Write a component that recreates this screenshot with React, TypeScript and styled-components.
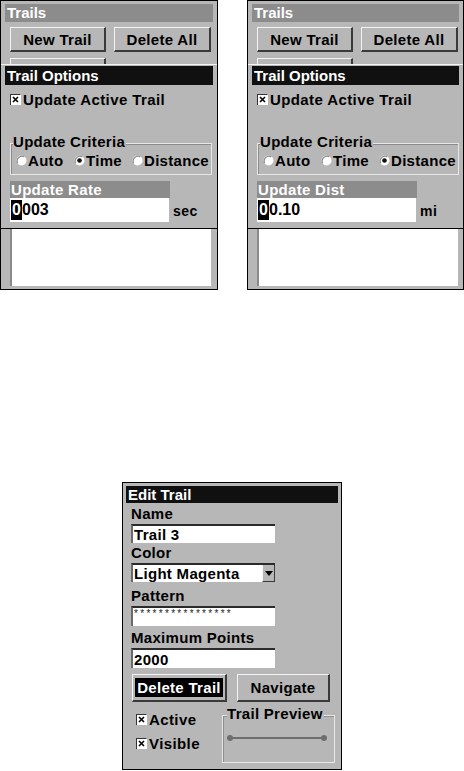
import React from "react";
import styled, { createGlobalStyle } from "styled-components";

const BG = "#b7b7b7";
const MID = "#8c8c8c";
const DARK = "#101010";

const Global = createGlobalStyle`
  html, body { margin: 0; padding: 0; background: #fff; }
  body {
    font-family: "Liberation Sans", Arial, sans-serif;
    font-weight: bold;
    font-size: 15px;
    color: #000;
  }
  * { box-sizing: border-box; }
`;

const Page = styled.div`
  width: 464px;
  height: 771px;
  display: flex;
  flex-direction: column;
`;

const TopRow = styled.div`
  display: flex;
  gap: 29px;
  height: 290px;
`;

const Panel = styled.section<{ $w: number }>`
  position: relative;
  width: ${(p) => p.$w}px;
  height: 290px;
  background: ${BG};
  border: 1px solid #000;
  padding: 3px 4px 3px 4px;
  display: flex;
  flex-direction: column;
`;

const GrayTitle = styled.div`
  height: 18px;
  line-height: 18px;
  background: ${MID};
  color: #fff;
  padding-left: 2px;
`;

const DarkTitle = styled.div<{ $h: number }>`
  height: ${(p) => p.$h}px;
  line-height: ${(p) => p.$h}px;
  background: ${DARK};
  color: #fff;
  padding-left: 2px;
`;

const ButtonRow = styled.div<{ $gap: number; $top: number; $left: number }>`
  display: flex;
  gap: ${(p) => p.$gap}px;
  margin-top: ${(p) => p.$top}px;
  padding-left: ${(p) => p.$left}px;
`;

const Button = styled.div<{ $w: number; $h: number }>`
  width: ${(p) => p.$w}px;
  height: ${(p) => p.$h}px;
  background: ${BG};
  border-top: 1px solid #f4f4f4;
  border-left: 1px solid #f4f4f4;
  border-right: 2px solid #3a3a3a;
  border-bottom: 2px solid #3a3a3a;
  display: flex;
  align-items: center;
  justify-content: center;
  letter-spacing: 0.3px;
`;

const Focus = styled.span`
  background: #000;
  color: #fff;
  padding: 1px 2px;
  line-height: 17px;
`;

const ListBox = styled.div`
  margin-top: auto;
  margin-left: 5px;
  width: 201px;
  height: 57px;
  background: #fff;
  border-left: 2px solid #8a8a8a;
`;

const Overlay = styled.div`
  position: absolute;
  left: 0;
  right: 0;
  top: 63px;
  height: 165px;
  background: ${BG};
  border-top: 1px solid #f4f4f4;
  border-bottom: 1px solid #000;
  padding: 1px 4px 0 4px;
  display: flex;
  flex-direction: column;
`;

const CheckRow = styled.div<{ $top: number; $left: number }>`
  display: flex;
  align-items: center;
  gap: 2px;
  height: 16px;
  margin-top: ${(p) => p.$top}px;
  padding-left: ${(p) => p.$left}px;
  letter-spacing: 0.4px;
`;

const Group = styled.div<{ $w: number; $h: number; $top: number; $left: number }>`
  width: ${(p) => p.$w}px;
  height: ${(p) => p.$h}px;
  margin-top: ${(p) => p.$top}px;
  margin-left: ${(p) => p.$left}px;
  border: 1px solid #e8e8e8;
  box-shadow: 1px 1px 0 #8c8c8c inset;
  display: flex;
  flex-direction: column;
`;

const Legend = styled.div<{ $left: number }>`
  align-self: flex-start;
  margin: -10px 0 0 ${(p) => p.$left}px;
  height: 16px;
  line-height: 16px;
  background: ${BG};
  padding-right: 1px;
  letter-spacing: 0.3px;
`;

const RadioRow = styled.div`
  display: flex;
  align-items: center;
  height: 16px;
  margin-top: 2px;
  padding-left: 5px;
`;

const RadioItem = styled.div<{ $w?: number }>`
  display: flex;
  align-items: center;
  gap: 1px;
  flex: 0 0 ${(p) => (p.$w ? `${p.$w}px` : "auto")};
  letter-spacing: 0.3px;
`;

const FieldHeader = styled.div`
  margin-top: 6px;
  margin-left: 5px;
  width: 160px;
  height: 17px;
  line-height: 17px;
  background: ${MID};
  color: #fff;
  padding-left: 1px;
  letter-spacing: 0.3px;
`;

const ValueRow = styled.div`
  display: flex;
  align-items: flex-end;
  margin-left: 5px;
`;

const ValueBox = styled.div`
  width: 159px;
  height: 24px;
  background: #fff;
  display: flex;
  align-items: center;
  padding-left: 1px;
  font-size: 16px;
`;

const Cursor = styled.span`
  display: inline-block;
  width: 11px;
  height: 20px;
  line-height: 20px;
  background: #000;
  color: #fff;
  text-align: center;
`;

const Unit = styled.span`
  margin-left: 4px;
  margin-bottom: 3px;
  font-size: 14px;
  letter-spacing: 0.5px;
`;

/* Edit trail panel */

const EditPanel = styled.section`
  margin-top: 192px;
  margin-left: 122px;
  width: 220px;
  height: 288px;
  background: ${BG};
  border: 1px solid #000;
  padding: 3px 3px 0 3px;
  display: flex;
  flex-direction: column;
`;

const EditBody = styled.div`
  display: flex;
  flex-direction: column;
  padding-left: 5px;
`;

const Label = styled.div<{ $h: number }>`
  height: ${(p) => p.$h}px;
  display: flex;
  align-items: flex-end;
  padding-bottom: 2px;
  line-height: 16px;
  letter-spacing: 0.3px;
`;

const TextBox = styled.div<{ $h: number }>`
  position: relative;
  width: 144px;
  height: ${(p) => p.$h}px;
  background: #fff;
  border-top: 2px solid #2a2a2a;
  border-left: 2px solid #6a6a6a;
  display: flex;
  align-items: center;
  padding-left: 1px;
  letter-spacing: 0.3px;
`;

const Stars = styled.div`
  align-self: flex-start;
  font-size: 10px;
  line-height: 10px;
  color: #222;
  font-weight: normal;
  letter-spacing: 2.3px;
  margin-top: 1px;
`;

const DropButton = styled.div`
  position: absolute;
  right: 0;
  top: 0;
  bottom: 0;
  width: 13px;
  background: ${BG};
  border-left: 1px solid #f4f4f4;
  border-right: 1px solid #3a3a3a;
  border-bottom: 1px solid #3a3a3a;
  display: flex;
  align-items: center;
  justify-content: center;
`;

const BottomArea = styled.div`
  display: flex;
  margin-top: 6px;
`;

const CheckCol = styled.div`
  width: 91px;
  display: flex;
  flex-direction: column;
  padding-top: 3px;
  gap: 8px;
`;

const PreviewLine = styled.div`
  margin: 6px 0 0 4px;
`;

const CheckBox: React.FC = () => (
  <svg width="11" height="11" viewBox="0 0 11 11">
    <rect x="0" y="0" width="11" height="11" fill="#fff" />
    <path d="M0 0.5H10.5M0.5 0V11" stroke="#333" strokeWidth="1" />
    <path d="M3 3L8 8M8 3L3 8" stroke="#000" strokeWidth="1.6" />
  </svg>
);

const Radio: React.FC<{ on?: boolean }> = ({ on }) => (
  <svg width="11" height="11" viewBox="0 0 11 11">
    <circle cx="5.5" cy="5.5" r="5" fill="#fff" />
    <path d="M1.6 8.2A5 5 0 0 1 8.2 1.6" stroke="#8a8a8a" strokeWidth="1.2" fill="none" />
    {on && <circle cx="5.5" cy="5.5" r="2.3" fill="#111" />}
  </svg>
);

const OptionsPanel: React.FC<{
  mode: "time" | "dist";
  w: number;
}> = ({ mode, w }) => (
  <Panel $w={w}>
    <GrayTitle>Trails</GrayTitle>
    <ButtonRow $gap={8} $top={5} $left={5}>
      <Button $w={96} $h={25}>New Trail</Button>
      <Button $w={97} $h={25}>Delete All</Button>
    </ButtonRow>
    <ButtonRow $gap={8} $top={6} $left={5}>
      <Button $w={96} $h={25} />
    </ButtonRow>
    <ListBox />
    <Overlay>
      <DarkTitle $h={19}>Trail Options</DarkTitle>
      <CheckRow $top={6} $left={5}>
        <CheckBox />
        <span>Update Active Trail</span>
      </CheckRow>
      <Group $w={202} $h={32} $top={36} $left={5}>
        <Legend $left={2}>Update Criteria</Legend>
        <RadioRow>
          <RadioItem $w={58}>
            <Radio />
            <span>Auto</span>
          </RadioItem>
          <RadioItem $w={58}>
            <Radio on={mode === "time"} />
            <span>Time</span>
          </RadioItem>
          <RadioItem>
            <Radio on={mode === "dist"} />
            <span>Distance</span>
          </RadioItem>
        </RadioRow>
      </Group>
      <FieldHeader>{mode === "time" ? "Update Rate" : "Update Dist"}</FieldHeader>
      <ValueRow>
        <ValueBox>
          <Cursor>0</Cursor>
          <span>{mode === "time" ? "003" : "0.10"}</span>
        </ValueBox>
        <Unit>{mode === "time" ? "sec" : "mi"}</Unit>
      </ValueRow>
    </Overlay>
  </Panel>
);

export default function App() {
  return (
    <Page>
      <Global />
      <TopRow>
        <OptionsPanel mode="time" w={218} />
        <OptionsPanel mode="dist" w={217} />
      </TopRow>
      <EditPanel>
        <DarkTitle $h={17}>Edit Trail</DarkTitle>
        <EditBody>
          <Label $h={21}>Name</Label>
          <TextBox $h={19}>Trail 3</TextBox>
          <Label $h={20}>Color</Label>
          <TextBox $h={19}>
            Light Magenta
            <DropButton>
              <svg width="8" height="5" viewBox="0 0 8 5">
                <path d="M0 0H8L4 5Z" fill="#000" />
              </svg>
            </DropButton>
          </TextBox>
          <Label $h={24}>Pattern</Label>
          <TextBox $h={20}>
            <Stars>****************</Stars>
          </TextBox>
          <Label $h={22}>Maximum Points</Label>
          <TextBox $h={20}>2000</TextBox>
          <ButtonRow $gap={10} $top={6} $left={1}>
            <Button $w={95} $h={28}>
              <Focus>Delete Trail</Focus>
            </Button>
            <Button $w={93} $h={28}>Navigate</Button>
          </ButtonRow>
          <BottomArea>
            <CheckCol>
              <CheckRow $top={0} $left={5}>
                <CheckBox />
                <span>Active</span>
              </CheckRow>
              <CheckRow $top={0} $left={5}>
                <CheckBox />
                <span>Visible</span>
              </CheckRow>
            </CheckCol>
            <Group $w={113} $h={48} $top={7} $left={0}>
              <Legend $left={4}>Trail Preview</Legend>
              <PreviewLine>
                <svg width="100" height="8" viewBox="0 0 100 8">
                  <line x1="3" y1="4" x2="97" y2="4" stroke="#6e6e6e" strokeWidth="2" />
                  <circle cx="3" cy="4" r="3" fill="#6e6e6e" />
                  <circle cx="97" cy="4" r="3" fill="#6e6e6e" />
                </svg>
              </PreviewLine>
            </Group>
          </BottomArea>
        </EditBody>
      </EditPanel>
    </Page>
  );
}
